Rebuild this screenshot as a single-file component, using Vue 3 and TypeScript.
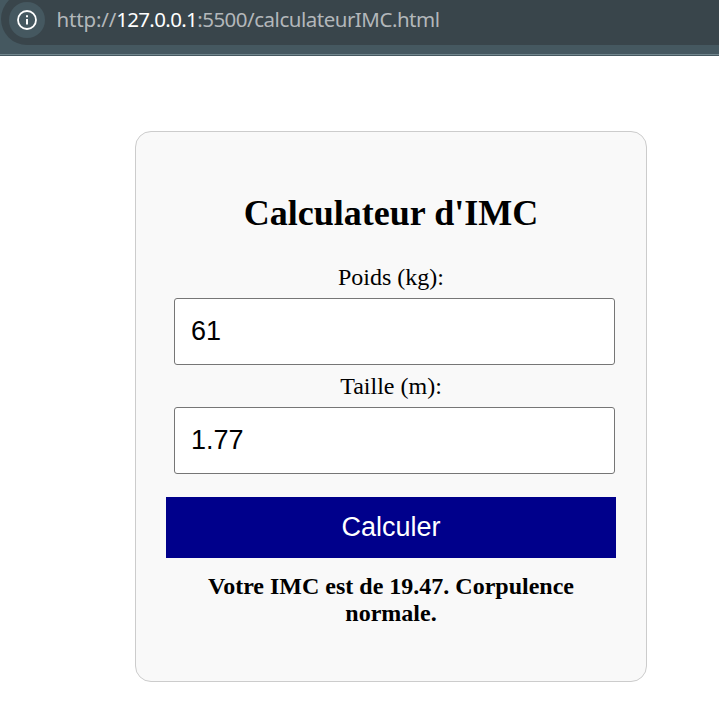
<script setup lang="ts">
import { ref } from 'vue'

const weight = ref('61')
const height = ref('1.77')
const result = ref('Votre IMC est de 19.47. Corpulence normale.')

function calculate(): void {
  const h = parseFloat(height.value)
  const bmi = parseFloat(weight.value) / (h * h)
  const label = bmi < 18.5 ? 'Maigreur' : bmi < 25 ? 'Corpulence normale' : bmi < 30 ? 'Surpoids' : 'Obésité'
  result.value = `Votre IMC est de ${bmi.toFixed(2)}. ${label}.`
}
</script>

<template>
  <div class="page">
    <header class="toolbar">
      <div class="address">
        <span class="badge">
          <svg width="20" height="20" viewBox="0 0 20 20" fill="none" stroke="#fff">
            <circle cx="10" cy="10" r="9" stroke-width="1.8" />
            <path d="M10 9v5.4" stroke-width="2" />
            <path d="M10 5.2v2" stroke-width="2" />
          </svg>
        </span>
        <span class="url">http://<span class="host">127.0.0.1</span><span class="path">:5500/calculateurIMC.html</span></span>
      </div>
    </header>
    <main class="card">
      <h1>Calculateur d'IMC</h1>
      <label for="weight">Poids (kg):</label>
      <input id="weight" v-model="weight" type="text" />
      <label for="height">Taille (m):</label>
      <input id="height" v-model="height" type="text" />
      <button type="button" @click="calculate">Calculer</button>
      <p class="result">{{ result }}</p>
    </main>
  </div>
</template>

<style>
body { background: #fff; }
</style>

<style scoped>
.page {
  height: 724px;
  overflow: hidden;
  font-family: "Liberation Serif", "Times New Roman", serif;
  color: #000;
}
.toolbar {
  box-sizing: border-box;
  height: 56px;
  display: flex;
  align-items: flex-start;
  overflow: hidden;
  background: linear-gradient(#455860 54px, #71868d 54px, #71868d 55px, #455860 55px);
}
.address {
  box-sizing: border-box;
  flex: 1;
  height: 52px;
  margin: -7px 0 0 1px;
  display: flex;
  align-items: center;
  background: #39454b;
  border-radius: 26px 0 0 26px;
  padding-left: 8px;
}
.badge {
  width: 36px;
  height: 36px;
  margin-top: 1px;
  border-radius: 50%;
  background: #455860;
  display: flex;
  align-items: center;
  justify-content: center;
}
.url {
  margin: 0 0 0 11.5px;
  font: 20.5px/30px "Noto Sans", sans-serif;
  letter-spacing: -0.17px;
  color: #b3b7ba;
  white-space: nowrap;
}
.host { color: #fff; letter-spacing: -0.65px; }
.path { letter-spacing: -0.49px; }
.card {
  box-sizing: border-box;
  width: 512px;
  height: 551px;
  margin: 75px 0 0 135px;
  padding: 60px 30px 0;
  border: 1px solid #ccc;
  border-radius: 16px;
  background: #f9f9f9;
  display: flex;
  flex-direction: column;
  align-items: center;
}
h1 {
  margin: 0 0 30px;
  font-size: 36px;
  line-height: 42px;
}
label { font-size: 24px; line-height: 27px; }
input {
  box-sizing: border-box;
  width: 441px;
  height: 67px;
  margin: 7px 0 8px 7px;
  padding: 0 16px 1px;
  border: 1px solid #767676;
  border-radius: 3px;
  background: #fff;
  font: 27px "Liberation Sans", Arial, sans-serif;
  color: #000;
}
button {
  width: 100%;
  height: 61px;
  flex: none;
  margin-top: 15px;
  padding: 0;
  border: 0;
  background: #00008b;
  color: #fff;
  font: 27px "Liberation Sans", Arial, sans-serif;
}
.result {
  margin: 15px 0 0;
  font-size: 24px;
  line-height: 27px;
  font-weight: 700;
  text-align: center;
}
</style>
